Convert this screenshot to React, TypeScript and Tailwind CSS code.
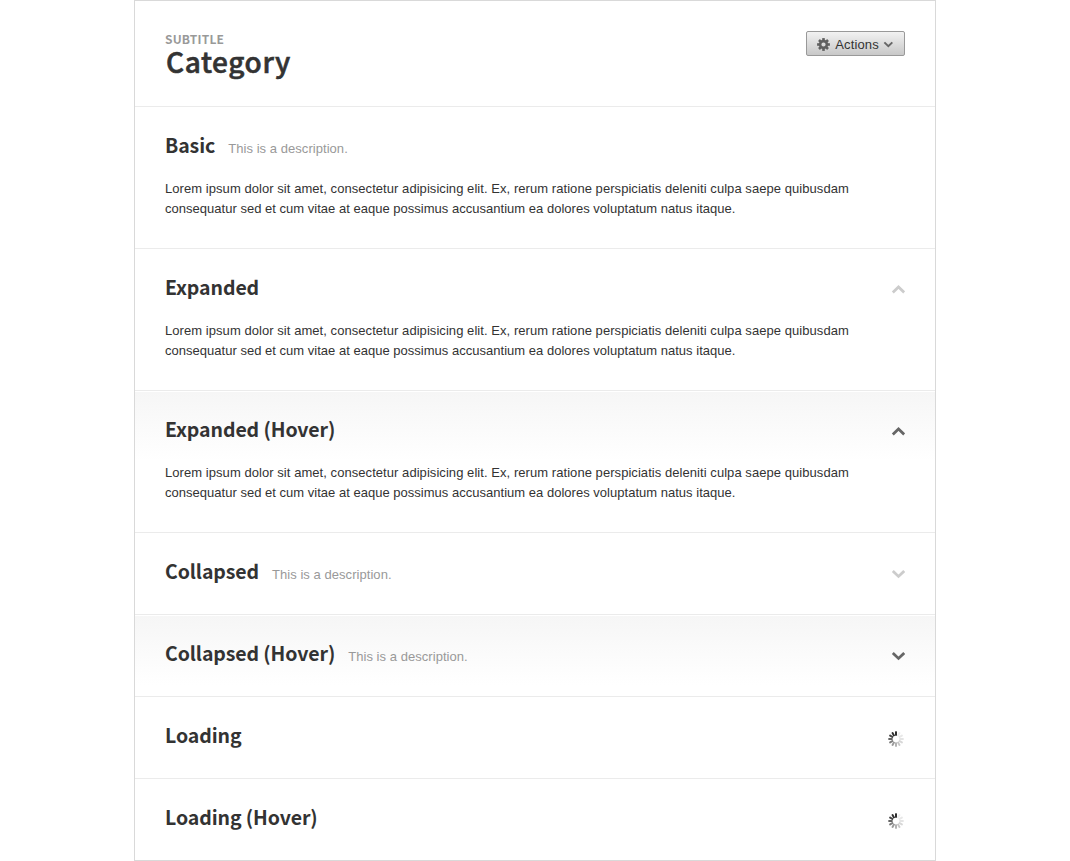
import type { ReactNode } from 'react';

const LOREM_1 =
  'Lorem ipsum dolor sit amet, consectetur adipisicing elit. Ex, rerum ratione perspiciatis deleniti culpa saepe quibusdam';
const LOREM_2 =
  'consequatur sed et cum vitae at eaque possimus accusantium ea dolores voluptatum natus itaque.';

function Chevron({ up = false, className }: { up?: boolean; className: string }) {
  return (
    <svg viewBox="0 0 14 10" className={className} fill="none" stroke="currentColor" strokeWidth="2.8">
      <path d={up ? 'M1.8 7.4 L7.5 2 L13.2 7.4' : 'M1.8 2 L7.5 7.4 L13.2 2'} />
    </svg>
  );
}

function Gear() {
  return (
    <svg viewBox="-6.5 -6.5 13 13" className="mt-px h-[13px] w-[13px] text-[#606060]">
      <circle r="3.4" fill="none" stroke="currentColor" strokeWidth="2.6" />
      {[0, 45, 90, 135, 180, 225, 270, 315].map((a) => (
        <rect key={a} x="-1.3" y="-6.4" width="2.6" height="2.6" fill="currentColor" transform={`rotate(${a})`} />
      ))}
    </svg>
  );
}

function Spinner() {
  const shades = [0.08, 0.1, 0.12, 0.18, 0.26, 0.36, 0.46, 0.58, 0.7, 0.84, 0.95, 1];
  return (
    <svg viewBox="-8 -8 16 16" className="mt-[11px] mr-px h-4 w-4">
      {shades.map((o, i) => (
        <rect
          key={i}
          x="-0.95"
          y="-7.7"
          width="1.9"
          height="4.4"
          rx="0.5"
          fill="#222"
          opacity={o}
          transform={`rotate(${(i + 1) * 30})`}
        />
      ))}
    </svg>
  );
}

interface SectionProps {
  title: string;
  description?: boolean;
  body?: boolean;
  hover?: boolean;
  icon?: ReactNode;
}

function Section({ title, description, body, hover, icon }: SectionProps) {
  return (
    <section
      className={`border-t border-[#ebebeb] px-[30px] ${body ? 'h-[142px]' : 'h-[82px]'} ${
        hover ? 'bg-[linear-gradient(#fff_1px,#f6f6f6_1px,#fff_70px)]' : ''
      }`}
    >
      <div className="flex h-[72px] items-start justify-between pt-[23px]">
        <div className="flex items-baseline">
          <h2 className="font-['Noto_Sans_CJK_JP','Noto_Sans_CJK_SC',sans-serif] text-[19.5px] leading-[30px] font-bold tracking-[-0.09px] whitespace-nowrap text-[#333]">
            {title}
          </h2>
          {description && (
            <span className="ml-[13px] text-[13px] leading-5 tracking-[0.05px] whitespace-nowrap text-[#999]">
              This is a description.
            </span>
          )}
        </div>
        {icon}
      </div>
      {body && (
        <p className="text-[13px] leading-5 whitespace-nowrap text-[#333]">
          <span className="block tracking-[0.057px]">{LOREM_1}</span>
          <span className="block tracking-[0.018px]">{LOREM_2}</span>
        </p>
      )}
    </section>
  );
}

export default function App() {
  const expand = 'mt-[13px] h-[10px] w-[14px]';
  return (
    <div className="h-[861px] overflow-hidden bg-white font-['Liberation_Sans',Arial,sans-serif]">
      <main className="mx-auto w-[802px] border border-[#d9d9d9]">
        <header className="flex h-[105px] justify-between px-[30px] pt-[30px]">
          <div>
            <div className="font-['Noto_Sans_CJK_JP','Noto_Sans_CJK_SC',sans-serif] text-[12px] leading-4 font-bold tracking-[0.2px] text-[#999]">
              SUBTITLE
            </div>
            <h1 className="pl-px font-['Noto_Sans_CJK_JP','Noto_Sans_CJK_SC',sans-serif] text-[28px] leading-[28px] font-medium tracking-[0.6px] text-[#333] [-webkit-text-stroke:0.6px_#333]">
              Category
            </h1>
          </div>
          <button className="flex h-[25px] w-[99px] items-center rounded-[2px] border border-[#999] bg-linear-to-b from-[#f2f2f2] to-[#c8c8c8] pl-[10px] text-[13px] text-[#333]">
            <Gear />
            <span className="mt-[2px] ml-[5px] w-[44px] tracking-[0.15px]">Actions</span>
            <Chevron className="mt-[2px] ml-1 h-[7px] w-[10px] text-[#666]" />
          </button>
        </header>
        <Section title="Basic" description body />
        <Section title="Expanded" body icon={<Chevron up className={`${expand} text-[#ccc]`} />} />
        <Section title="Expanded (Hover)" body hover icon={<Chevron up className={`${expand} text-[#666]`} />} />
        <Section title="Collapsed" description icon={<Chevron className={`${expand} text-[#ccc]`} />} />
        <Section title="Collapsed (Hover)" description hover icon={<Chevron className={`${expand} text-[#666]`} />} />
        <Section title="Loading" icon={<Spinner />} />
        <Section title="Loading (Hover)" icon={<Spinner />} />
      </main>
    </div>
  );
}
